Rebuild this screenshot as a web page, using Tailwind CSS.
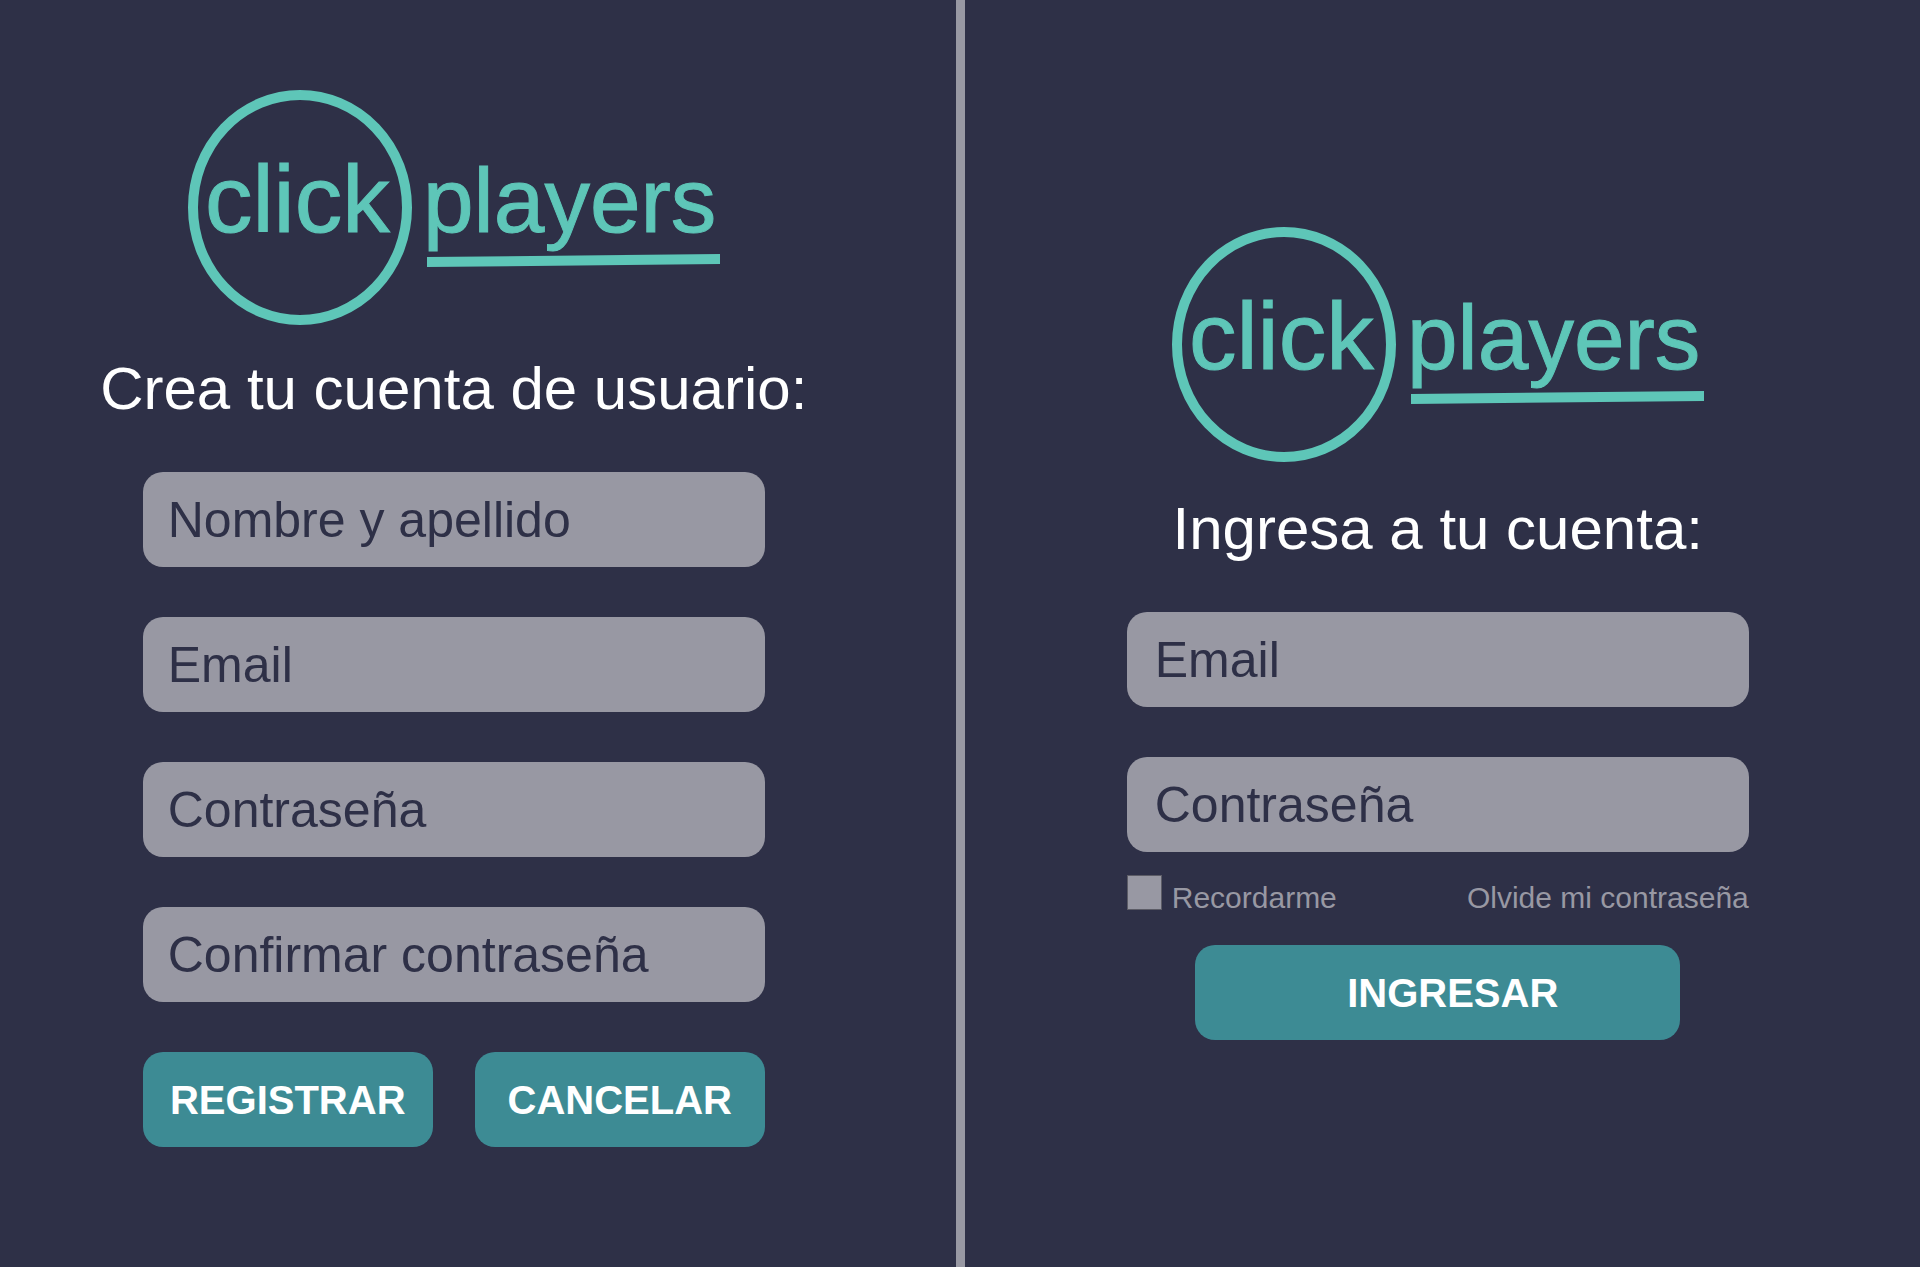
<!DOCTYPE html>
<html lang="es">
<head>
<meta charset="utf-8">
<meta name="viewport" content="width=device-width, initial-scale=1">
<title>click players</title>
<script src="https://cdn.jsdelivr.net/npm/@tailwindcss/browser@4"></script>
</head>
<body class="bg-[#2e3047] font-['Liberation_Sans',Arial,sans-serif] text-white">
<div class="grid min-h-screen grid-cols-[1fr_9px_1fr]">

  <main class="flex flex-col items-center pt-[90px] pr-12 pb-12">
    <svg class="h-[235px] w-[532px] shrink-0" viewBox="0 0 532 235" role="img" aria-label="click players">
      <ellipse cx="112" cy="117.5" rx="107" ry="112.5" fill="none" stroke="#5ec6b8" stroke-width="10"/>
      <g fill="#5ec6b8" stroke="#5ec6b8" stroke-width="1">
        <text x="17" y="142" font-size="95">click</text>
        <text x="235" y="142" font-size="91">players</text>
      </g>
      <path d="M239 167L532 164V174L239 177Z" fill="#5ec6b8"/>
    </svg>
    <h1 class="mt-7 text-[60px] leading-[72px] whitespace-nowrap">Crea tu cuenta de usuario:</h1>
    <form class="mt-[47px] flex w-full max-w-[622px] flex-col gap-[50px]">
      <input type="text" aria-label="Nombre y apellido" placeholder="Nombre y apellido" class="h-[95px] w-full rounded-[20px] bg-[#9898a3] px-[25px] text-[50px] text-[#2e3047] placeholder:text-[#2e3047]">
      <input type="email" aria-label="Email" placeholder="Email" class="h-[95px] w-full rounded-[20px] bg-[#9898a3] px-[25px] text-[50px] text-[#2e3047] placeholder:text-[#2e3047]">
      <input type="password" aria-label="Contraseña" placeholder="Contraseña" class="h-[95px] w-full rounded-[20px] bg-[#9898a3] px-[25px] text-[50px] text-[#2e3047] placeholder:text-[#2e3047]">
      <input type="password" aria-label="Confirmar contraseña" placeholder="Confirmar contraseña" class="h-[95px] w-full rounded-[20px] bg-[#9898a3] px-[25px] text-[50px] text-[#2e3047] placeholder:text-[#2e3047]">
      <div class="grid grid-cols-2 gap-[42px]">
        <button type="submit" class="h-[95px] rounded-[20px] bg-[#3d8b94] text-[40px] font-bold">REGISTRAR</button>
        <button type="button" class="h-[95px] rounded-[20px] bg-[#3d8b94] text-[40px] font-bold">CANCELAR</button>
      </div>
    </form>
  </main>

  <div class="bg-[#9898a3]"></div>

  <section class="flex flex-col items-center pt-[227px] pr-[9px] pb-12">
    <svg class="h-[235px] w-[532px] shrink-0" viewBox="0 0 532 235" role="img" aria-label="click players">
      <ellipse cx="112" cy="117.5" rx="107" ry="112.5" fill="none" stroke="#5ec6b8" stroke-width="10"/>
      <g fill="#5ec6b8" stroke="#5ec6b8" stroke-width="1">
        <text x="17" y="142" font-size="95">click</text>
        <text x="235" y="142" font-size="91">players</text>
      </g>
      <path d="M239 167L532 164V174L239 177Z" fill="#5ec6b8"/>
    </svg>
    <h2 class="mt-[31px] text-[60px] leading-[72px] whitespace-nowrap">Ingresa a tu cuenta:</h2>
    <form class="mt-[47px] flex w-full max-w-[622px] flex-col">
      <div class="flex flex-col gap-[50px]">
        <input type="email" aria-label="Email" placeholder="Email" class="h-[95px] w-full rounded-[20px] bg-[#9898a3] px-7 text-[50px] text-[#2e3047] placeholder:text-[#2e3047]">
        <input type="password" aria-label="Contraseña" placeholder="Contraseña" class="h-[95px] w-full rounded-[20px] bg-[#9898a3] px-7 text-[50px] text-[#2e3047] placeholder:text-[#2e3047]">
      </div>
      <div class="mt-[23px] flex items-end justify-between text-[30px] leading-6 text-[#9898a3]">
        <div class="flex items-end gap-[10px]">
          <input id="recordarme" type="checkbox" class="size-[35px] appearance-none border border-[#5c5c66] bg-[#9898a3] checked:bg-[#3d8b94]">
          <label for="recordarme">Recordarme</label>
        </div>
        <a href="#">Olvide mi contraseña</a>
      </div>
      <button type="submit" class="mt-[35px] h-[95px] w-full max-w-[485px] self-center rounded-[20px] bg-[#3d8b94] pl-[30px] text-[40px] font-bold">INGRESAR</button>
    </form>
  </section>

</div>
</body>
</html>
